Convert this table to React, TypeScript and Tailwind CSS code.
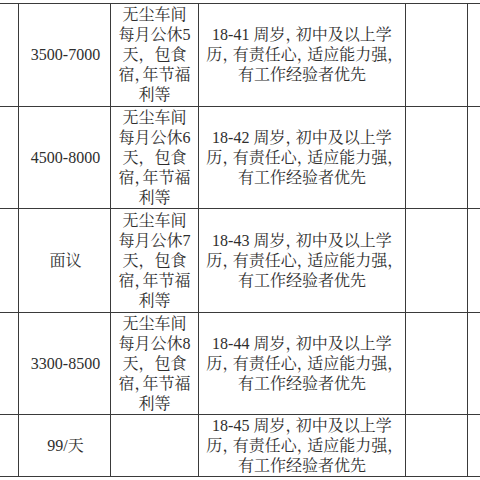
const rows = [
  { pay: "3500-7000", days: "5", age: "18-41", h: "h-[103px]" },
  { pay: "4500-8000", days: "6", age: "18-42", h: "h-[102px]" },
  { pay: "面议", days: "7", age: "18-43", h: "h-[104px]" },
  { pay: "3300-8500", days: "8", age: "18-44", h: "h-[102px]" },
  { pay: "99/天", days: "", age: "18-45", h: "h-[62px]" },
];

const cell = "border-r border-b border-[#3a3a3a]";

// compressed comma, like Word's punctuation squeeze
function Comma({ tight }: { tight?: boolean }) {
  return <span className={tight ? "tracking-[-0.5em]" : "tracking-[-0.35em]"}>，</span>;
}

export default function App() {
  return (
    <div
      className="w-[480px] h-[480px] bg-white overflow-hidden text-[#2e2e2e]"
      style={{ fontFamily: '"Liberation Serif", "Noto Serif CJK SC", "Noto Sans CJK SC", serif' }}
    >
      <div className="mt-[3px] border-t border-[#3a3a3a]">
        {rows.map((r, i) => (
          <div key={i} className={`grid grid-cols-[19px_92px_88px_207px_62px_12px] ${r.h}`}>
            <div className={cell}></div>
            <div className={`${cell} flex items-center justify-center text-[16px] pl-[2px]`}>
              {r.pay}
            </div>
            <div className={`${cell} flex flex-col items-center justify-center text-[16px] leading-[20px] whitespace-nowrap`}>
              {r.days && (
                <>
                  <span>无尘车间</span>
                  <span>每月公休{r.days}</span>
                  <span>天，包食</span>
                  <span>宿<Comma tight />年节福</span>
                  <span>利等</span>
                </>
              )}
            </div>
            <div className={`${cell} flex flex-col items-center justify-center text-[16px] leading-[20px] whitespace-nowrap`}>
              <span>{r.age} 周岁<Comma />初中及以上学</span>
              <span>历<Comma />有责任心<Comma />适应能力强<Comma /></span>
              <span>有工作经验者优先</span>
            </div>
            <div className={cell}></div>
            <div className="border-b border-[#3a3a3a]"></div>
          </div>
        ))}
      </div>
    </div>
  );
}
